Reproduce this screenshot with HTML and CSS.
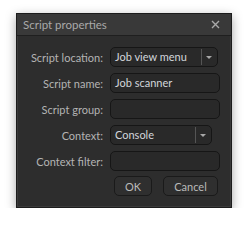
FILE: index.html
```
<!DOCTYPE html>
<html lang="en">
<head>
    <meta charset="UTF-8">
    <title>Script properties</title>
    <link rel="stylesheet" href="styles.css">
</head>
<body>

<div class="dialogo">
    <div class="titulo">
        <span>Script properties</span>
        <svg class="fechar" width="9" height="9" viewBox="0 0 9 9">
            <path d="M1 1L8 8M8 1L1 8" stroke="#a9a9a9" stroke-width="1.4"/>
        </svg>
    </div>

    <div class="corpo">
        <div class="linha">
            <label>Script location:</label>
            <div class="combo">
                <span class="valor">Job view menu</span>
                <span class="seta"></span>
            </div>
        </div>
        <div class="linha">
            <label>Script name:</label>
            <div class="campo">Job scanner</div>
        </div>
        <div class="linha">
            <label>Script group:</label>
            <div class="campo"></div>
        </div>
        <div class="linha">
            <label>Context:</label>
            <div class="combo curto">
                <span class="valor">Console</span>
                <span class="seta"></span>
            </div>
        </div>
        <div class="linha">
            <label>Context filter:</label>
            <div class="campo"></div>
        </div>

        <div class="botoes">
            <button type="button" class="ok">OK</button>
            <button type="button" class="cancelar">Cancel</button>
        </div>
    </div>
</div>

</body>
</html>
```

FILE: styles.css
```
body {
    margin: 0;
    padding: 13px 18px 0 16px;
    background-color: #fff;
    font-family: Lato, "Open Sans", sans-serif;
}
.dialogo {
    width: 214px;
    background-color: #2d2d2d;
    border: 1px solid #1c1c1c;
    box-shadow: 0 3px 10px rgba(0, 0, 0, 0.35);
}
.titulo {
    height: 21px;
    display: flex;
    align-items: center;
    justify-content: space-between;
    padding: 0 11px 0 6px;
    background-color: #393939;
    border-bottom: 1px solid #1f1f1f;
    color: #a9a9a9;
    font-size: 11.5px;
}
.corpo {
    padding: 11px 12px 10px 8px;
    border: 1px solid #3a3a3a;
    border-top: none;
}
.linha {
    display: grid;
    grid-template-columns: 77px 110px;
    column-gap: 7px;
    align-items: center;
    margin-bottom: 6px;
}
label {
    text-align: right;
    white-space: nowrap;
    color: #b4b4b4;
    font-size: 11px;
}
.campo, .combo {
    height: 18px;
    box-sizing: content-box;
    background-color: #292929;
    border: 1px solid #161616;
    border-radius: 5px;
    color: #d2d6db;
    font-size: 11px;
    line-height: 18px;
    padding: 0 4px;
}
.campo {
    width: 100px;
}
.combo {
    width: 102px;
    display: flex;
    padding-right: 0;
}
.combo.curto {
    width: 96px;
}
.valor {
    flex: 1;
}
.seta {
    width: 15px;
    border-left: 1px solid #555;
    margin: 1px 0;
    position: relative;
}
.seta::after {
    content: "";
    position: absolute;
    left: 4px;
    top: 7px;
    border-left: 3px solid transparent;
    border-right: 3px solid transparent;
    border-top: 3px solid #a8a8a8;
}
.botoes {
    display: flex;
    justify-content: flex-end;
    gap: 11px;
    margin-top: -1px;
}
button {
    height: 20px;
    background-color: #2f2f2f;
    border: 1px solid #1a1a1a;
    border-radius: 5px;
    color: #bababa;
    font-family: Lato, sans-serif;
    font-size: 11px;
    padding: 0;
}
.ok {
    width: 38px;
}
.cancelar {
    width: 55px;
}
```
